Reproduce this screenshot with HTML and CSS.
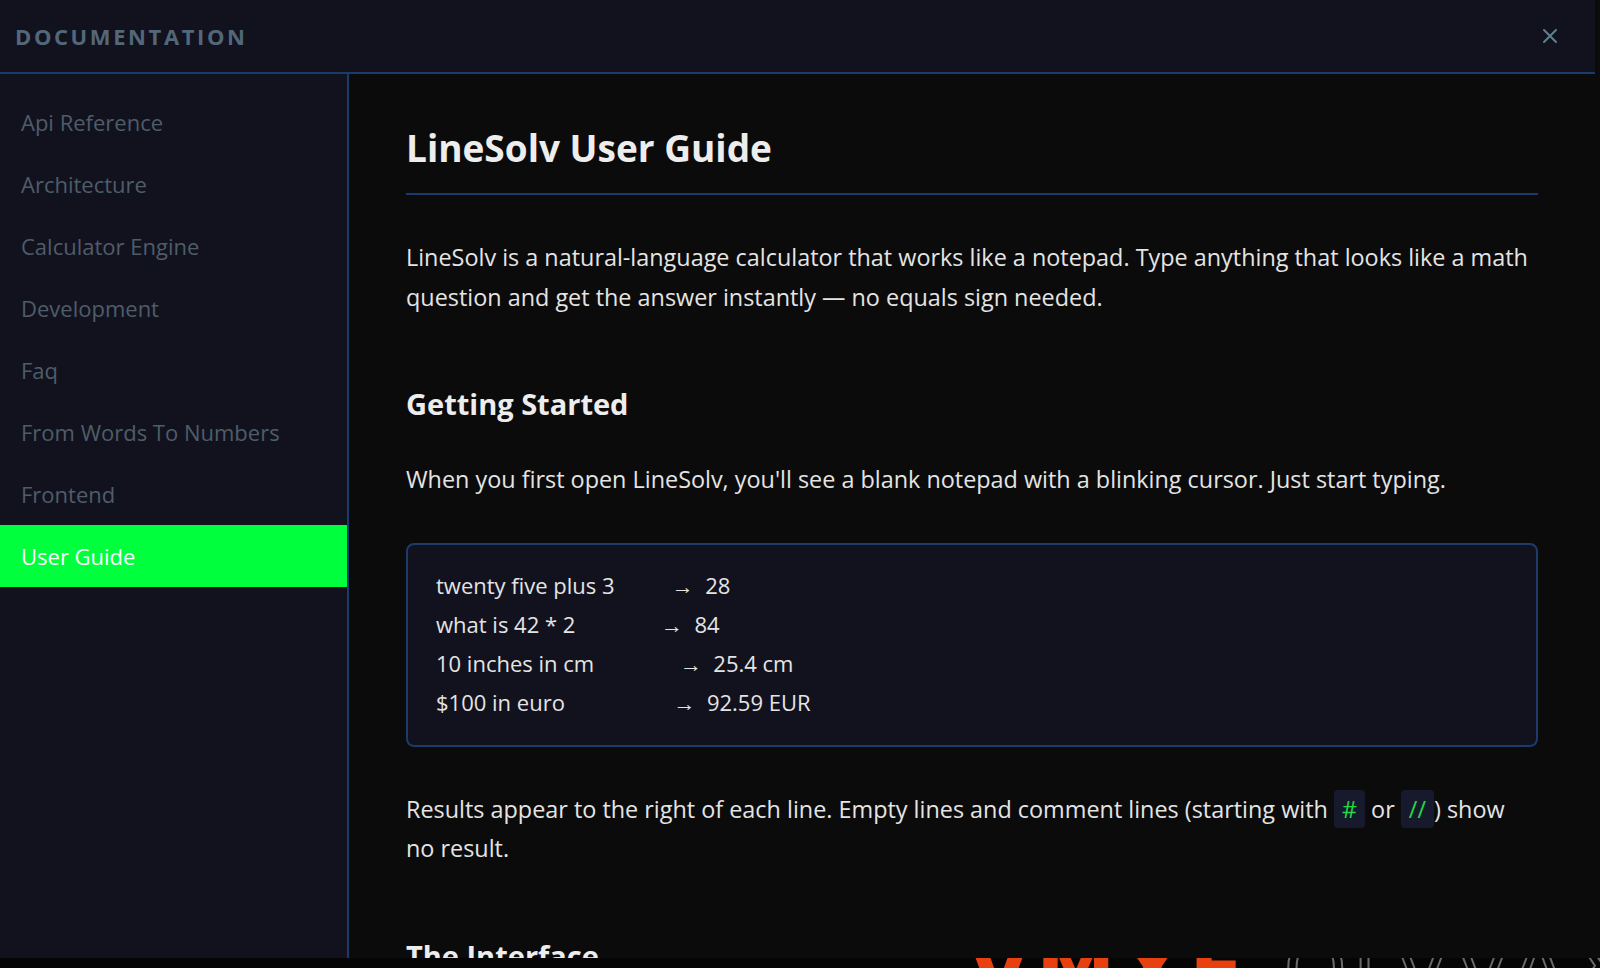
FILE: index.html
```
<!DOCTYPE html>
<html lang="en">
<head>
    <meta charset="UTF-8" />
    <meta name="viewport" content="width=device-width, initial-scale=1.0"/>
    <title>LineSolv Docs</title>
    <link rel="stylesheet" href="styles.css">
</head>
<body>
    <div class="screen">
        <div class="screen-top">
            <div class="docs-modal">
                <header class="docs-header">
                    <h1 class="docs-title">DOCUMENTATION</h1>
                    <button class="docs-close" aria-label="Close">
                        <svg width="16" height="16" viewBox="0 0 16 16">
                            <path d="M2 2 L14 14 M14 2 L2 14" stroke="currentColor" stroke-width="2" stroke-linecap="round"/>
                        </svg>
                    </button>
                </header>

                <div class="docs-body">
                    <nav class="docs-nav">
                        <a class="nav-item" href="#">Api Reference</a>
                        <a class="nav-item" href="#">Architecture</a>
                        <a class="nav-item" href="#">Calculator Engine</a>
                        <a class="nav-item" href="#">Development</a>
                        <a class="nav-item" href="#">Faq</a>
                        <a class="nav-item" href="#">From Words To Numbers</a>
                        <a class="nav-item" href="#">Frontend</a>
                        <a class="nav-item active" href="#">User Guide</a>
                    </nav>

                    <article class="docs-content">
                        <h1 class="doc-h1">LineSolv User Guide</h1>
                        <p>LineSolv is a natural-language calculator that works like a notepad. Type anything that looks like a math question and get the answer instantly — no equals sign needed.</p>

                        <h2 class="doc-h2">Getting Started</h2>
                        <p>When you first open LineSolv, you'll see a blank notepad with a blinking cursor. Just start typing.</p>

<pre class="doc-pre">twenty five plus 3          →  28
what is 42 * 2               →  84
10 inches in cm               →  25.4 cm
$100 in euro                   →  92.59 EUR</pre>

                        <p>Results appear to the right of each line. Empty lines and comment lines (starting with <code>#</code> or <code>//</code>) show no result.</p>

                        <h2 class="doc-h2">The Interface</h2>
                        <p>The window is split into two columns: your input on the left and the results on the right.</p>
                    </article>
                </div>
            </div>
            <div class="app-edge"></div>
        </div>
        <div class="app-peek">
            <span class="peek-accent">VMXE</span>
            <span class="peek-outline">OLVVAX</span>
        </div>
    </div>
</body>
</html>
```

FILE: styles.css
```
* {
    margin: 0;
    padding: 0;
    box-sizing: border-box;
}

body {
    background: #050505;
    font-family: "Open Sans", "Noto Sans", sans-serif;
    width: 1600px;
    height: 968px;
    overflow: hidden;
}

.screen {
    display: flex;
    flex-direction: column;
    height: 100%;
}

.screen-top {
    display: flex;
    height: 958px;
    flex-shrink: 0;
}

/* the app underneath peeks out at the right and bottom edges */
.app-edge {
    flex: 1;
    background: #0b0b0b;
}

.app-peek {
    flex: 1;
    overflow: hidden;
    display: flex;
    gap: 34px;
    padding-left: 968px;
}

.peek-accent,
.peek-outline {
    font-family: "DejaVu Sans", sans-serif;
    font-size: 80px;
    font-weight: 700;
    line-height: 1;
    letter-spacing: 6px;
    margin-top: -28px;
}

.peek-accent {
    color: #e8400e;
}

.peek-outline {
    color: transparent;
    -webkit-text-stroke: 2px #6a6a6a;
    font-weight: 400;
}

/* modal */
.docs-modal {
    width: 1595px;
    display: flex;
    flex-direction: column;
    background: #0b0b0b;
}

.docs-header {
    height: 74px;
    flex-shrink: 0;
    background: #12121f;
    border-bottom: 2px solid #1b3b6b;
    display: flex;
    align-items: center;
    justify-content: space-between;
    padding: 0 37px 0 15px;
}

.docs-title {
    font-size: 22px;
    font-weight: 700;
    letter-spacing: 2.6px;
    color: #52687a;
}

.docs-close {
    background: none;
    border: none;
    color: #5d8190;
    display: flex;
    cursor: pointer;
}

.docs-body {
    flex: 1;
    display: flex;
    min-height: 0;
}

.docs-nav {
    width: 349px;
    flex-shrink: 0;
    background: #12121f;
    border-right: 2px solid #1b3b6b;
    padding-top: 17px;
    display: flex;
    flex-direction: column;
}

.nav-item {
    height: 62px;
    display: flex;
    align-items: center;
    padding-left: 21px;
    font-size: 22px;
    color: #4f5c69;
    text-decoration: none;
}

.nav-item.active {
    background: #00ff3c;
    color: #ffffff;
}

.docs-content {
    flex: 1;
    overflow: hidden;
    padding: 50px 57px 0 57px;
    color: #e4e4e4;
    font-size: 23.4px;
    line-height: 39.6px;
}

.doc-h1 {
    font-size: 37px;
    line-height: 48px;
    font-weight: 700;
    color: #ededed;
    padding-bottom: 21px;
    border-bottom: 2px solid #1b3b6b;
    margin-bottom: 43px;
}

.docs-content p {
    margin-bottom: 43px;
}

.doc-h2 {
    font-size: 29px;
    line-height: 38px;
    font-weight: 700;
    color: #ededed;
    margin-top: 68px;
    margin-bottom: 37px;
}

.doc-pre {
    font-family: inherit;
    font-size: 22px;
    line-height: 39px;
    background: #12121f;
    border: 2px solid #1b3b6b;
    border-radius: 8px;
    padding: 21px 28px 23px;
    margin-bottom: 43px;
    color: #e4e4e4;
}

.docs-content code {
    font-family: inherit;
    background: #171a2c;
    color: #1fdc45;
    padding: 3px 8px;
    border-radius: 4px;
}
```
